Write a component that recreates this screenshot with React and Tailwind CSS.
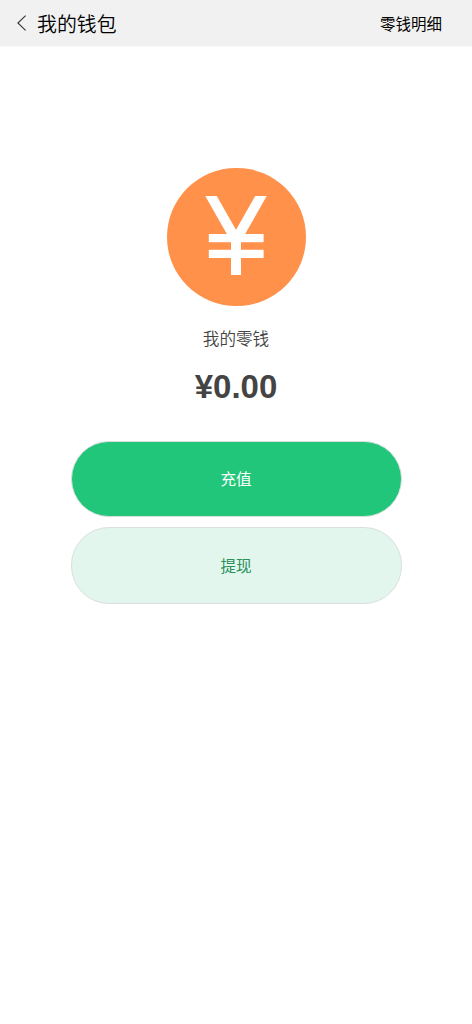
import clsx from 'clsx';

// Yuan sign made of strokes, the top of both arms is cut flat by the viewBox
const YuanIcon = () => (
  <svg
    viewBox="0 0 62 79"
    className="w-[62px] h-[79px] overflow-hidden"
    fill="none"
    stroke="white"
  >
    <path d="M0.35 -10 L31 44 L61.65 -10" strokeWidth="10" strokeLinejoin="bevel" />
    <path d="M31 38 V79" strokeWidth="10" />
    <path d="M3.8 42.2 H58.6 M3.8 57.9 H58.6" strokeWidth="8.3" />
  </svg>
);

const BackIcon = () => (
  <svg viewBox="0 0 10 16" className="w-[10px] h-[16px]" fill="none" stroke="#333333">
    <path d="M8.6 0.7 L0.9 8 L8.6 15.3" strokeWidth="1.1" />
  </svg>
);

const WalletButton = ({ primary, children }) => (
  <button
    className={clsx(
      'w-full rounded-[38px] border border-[#d9dfdc] text-[15.6px] leading-6',
      primary ? 'h-[76px] pt-[2px] bg-[#21c67a] text-white' : 'h-[77px] pt-[4px] bg-[#e2f6ee] text-[#2a9158]'
    )}
  >
    {children}
  </button>
);

const App = () => {
  return (
    <div className="min-h-screen bg-white font-['Liberation_Sans','Noto_Sans_CJK_SC',sans-serif]">
      {/* Header */}
      <header className="h-[46px] bg-[#f1f1f1] border-b border-[#fafafa] box-content flex items-center justify-between pl-[17px] pr-[30px] text-black">
        <div className="flex items-center gap-[10px]">
          <BackIcon />
          <h1 className="pt-[3px] text-[19.9px] leading-7 font-[350]">我的钱包</h1>
        </div>
        <button className="pt-[3px] text-[15.5px] leading-6">零钱明细</button>
      </header>

      {/* Balance */}
      <main className="flex flex-col items-center pt-[120.5px]">
        <div className="w-[139px] h-[138.5px] rounded-full bg-[#ff914a] flex items-center justify-center pb-[3px]">
          <YuanIcon />
        </div>
        <p className="mt-[22px] text-[16.6px] leading-6 font-[350] text-[#444444]">我的零钱</p>
        <p className="mt-[14.5px] text-[33px] leading-10 font-bold text-[#444444]">¥0.00</p>

        {/* Actions */}
        <div className="w-[331px] mt-[34px] flex flex-col gap-[10px]">
          <WalletButton primary>充值</WalletButton>
          <WalletButton>提现</WalletButton>
        </div>
      </main>
    </div>
  );
};

export default App;
